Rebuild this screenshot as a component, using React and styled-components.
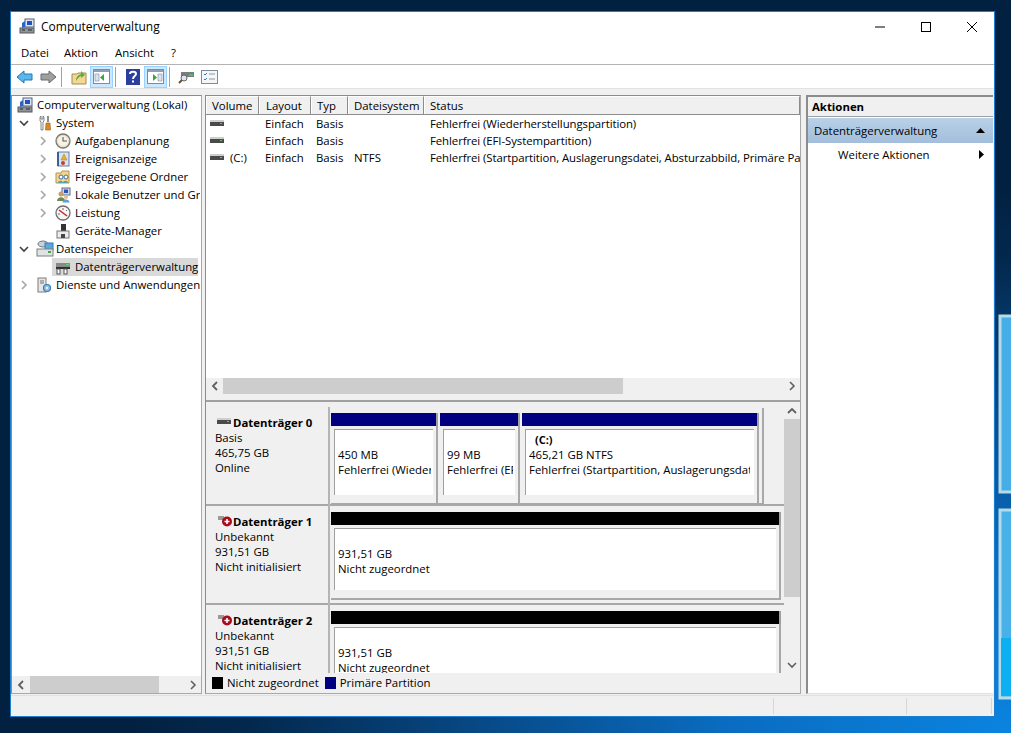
import React from "react";
import styled, { createGlobalStyle } from "styled-components";

const Global = createGlobalStyle`
  html, body { margin: 0; padding: 0; height: 100%; overflow: hidden; }
  #root { height: 100%; }
  * { box-sizing: border-box; }
`;

const Desktop = styled.div`
  position: relative;
  width: 1011px;
  height: 733px;
  padding: 11px 16px 16px 10px;
  overflow: hidden;
  background: radial-gradient(ellipse 900px 560px at 100% 100%, #0a84e0 0%, #0a6cc0 32%, #07457f 62%, #03284d 85%, #02203f 100%);
  font-family: "Open Sans", "Noto Sans", sans-serif;
  font-size: 11.4px;
  color: #000;
`;
const Backdrop = styled.svg`
  position: absolute;
  left: 0;
  top: 0;
`;
const Window = styled.div`
  position: relative;
  height: 706px;
  border: 1px solid #1a7fd0;
  background: #f0f0f0;
  display: flex;
  flex-direction: column;
`;
const TitleBar = styled.div`
  height: 30px;
  background: #fff;
  display: flex;
  align-items: center;
  padding: 0 0 2px 8px;
  gap: 6px;
  font-size: 12px;
`;
const TitleText = styled.span`
  flex: 1;
`;
const CaptionGroup = styled.div`
  display: flex;
  margin: 2px -1px 0 0;
`;
const Caption = styled.div`
  width: 46px;
  height: 30px;
  display: flex;
  align-items: center;
  justify-content: center;
`;
const MenuBar = styled.div`
  height: 23px;
  background: #fff;
  display: flex;
  align-items: center;
  padding: 0 0 2px 10px;
  border-bottom: 1px solid #b4b4b4;
`;
const MenuItem = styled.span`
  width: ${(p) => p.$w}px;
`;
const ToolBar = styled.div`
  height: 24px;
  background: #fff;
  border-bottom: 1px solid #e3e3e3;
  display: flex;
  align-items: center;
  padding-left: 2px;
`;
const ToolBtn = styled.div`
  width: ${(p) => p.$w || 23}px;
  height: 22px;
  display: flex;
  align-items: center;
  justify-content: center;
  ${(p) => p.$on && "background:#cce8ff;border:1px solid #99d1ff;"}
`;
const ToolSep = styled.div`
  width: 1px;
  height: 20px;
  background: #a0a0a0;
  margin: 0 5px 0 2px;
`;
const Main = styled.div`
  flex: 1;
  min-height: 0;
  display: flex;
  padding: 6px 1px 1px 0;
  gap: 3px;
`;
const Panel = styled.div`
  background: #fff;
  border-top: 1px solid #8c8c8c;
  border-left: 1px solid #8c8c8c;
  border-right: 1px solid #a8a8a8;
  border-bottom: 1px solid #a8a8a8;
  display: flex;
  flex-direction: column;
  min-height: 0;
  overflow: hidden;
`;
const TreePanel = styled(Panel)`
  width: 191px;
  flex: none;
`;
const Tree = styled.div`
  flex: 1;
  margin-right: 1px;
  overflow: hidden;
`;
const TreeRow = styled.div`
  height: 18px;
  display: flex;
  align-items: center;
  white-space: nowrap;
  padding-left: ${(p) => p.$indent}px;
`;
const Chevron = styled.div`
  width: 13px;
  height: 16px;
  margin-right: 3px;
  display: flex;
  align-items: center;
  justify-content: center;
  flex: none;
`;
const TreeIcon = styled.div`
  width: 18px;
  height: 18px;
  display: flex;
  align-items: center;
  flex: none;
  margin-right: 1px;
`;
const TreeLabel = styled.span`
  line-height: 18px;
  padding: 0 1px;
`;
const TreeItem = styled.div`
  display: flex;
  align-items: center;
  padding-left: ${(p) => (p.$root ? 0 : 3)}px;
  ${(p) => p.$sel && "background:#d9d9d9;width:146px;"}
`;
const HScroll = styled.div`
  height: ${(p) => p.$h || 17}px;
  background: #f0f0f0;
  display: flex;
  align-items: center;
  flex: none;
`;
const ScrollBtn = styled.div`
  width: ${(p) => p.$s || 17}px;
  height: 16px;
  display: flex;
  align-items: center;
  justify-content: center;
  flex: none;
`;
const HThumb = styled.div`
  width: ${(p) => p.$w}px;
  height: 100%;
  background: #cdcdcd;
  flex: none;
`;
const Filler = styled.div`
  flex: 1;
`;
const CenterPanel = styled(Panel)`
  width: 596px;
  flex: none;
  background: #f0f0f0;
`;
const ListArea = styled.div`
  height: 298px;
  background: #fff;
  display: flex;
  flex-direction: column;
  flex: none;
`;
const ColGrid = styled.div`
  display: grid;
  grid-template-columns: 53px 52px 37px 76px 1fr;
`;
const HeaderRow = styled(ColGrid)`
  height: 19px;
  flex: none;
  border-bottom: 1px solid #8c8c8c;
`;
const HeaderCell = styled.div`
  background: #f0f0f0;
  border-right: 1px solid #8c8c8c;
  border-left: 1px solid #fff;
  border-top: 1px solid #fff;
  padding-left: ${(p) => p.$p}px;
  line-height: 17px;
  white-space: nowrap;
`;
const Rows = styled.div`
  flex: 1;
`;
const DataRow = styled(ColGrid)`
  height: 17px;
  line-height: 17px;
  white-space: nowrap;
`;
const Cell = styled.div`
  padding-left: ${(p) => p.$p || 6}px;
  overflow: hidden;
  display: flex;
  align-items: center;
`;
const StatusText = styled(Cell)`
  letter-spacing: -0.08px;
`;
const VolCell = styled(Cell)`
  padding-left: 4px;
  gap: 6px;
`;
const Splitter = styled.div`
  height: 8px;
  flex: none;
  background: #f0f0f0;
  border-bottom: 2px solid #a0a0a0;
`;
const DiskArea = styled.div`
  flex: 1;
  min-height: 0;
  display: flex;
  padding-top: 1px;
`;
const DiskList = styled.div`
  flex: 1;
  overflow: hidden;
  padding-top: 4px;
`;
const DiskRow = styled.div`
  height: 99px;
  display: flex;
  border-bottom: 2px solid #a8a8a8;
`;
const DiskInfo = styled.div`
  width: 124px;
  flex: none;
  padding: 7px 0 0 9px;
  line-height: 15px;
  border-right: 2px solid #b4b4b4;
  margin-bottom: -2px;
  white-space: nowrap;
`;
const DiskName = styled.div`
  display: flex;
  align-items: center;
  font-weight: 700;
  gap: ${(p) => p.$gap}px;
  margin-left: 2px;
  height: 16px;
`;
const Volumes = styled.div`
  flex: none;
  width: ${(p) => p.$w}px;
  height: ${(p) => p.$h}px;
  margin: 1px 0 0 1px;
  border-right: ${(p) => (p.$plain ? "0" : "2px solid #a8a8a8")};
  border-bottom: 2px solid #a8a8a8;
  display: flex;
  padding: 5px ${(p) => (p.$plain ? 0 : 3)}px 0 0;
  gap: 2px;
`;
const Volume = styled.div`
  width: ${(p) => p.$w}px;
  min-width: 0;
  display: flex;
  flex-direction: column;
  flex: ${(p) => (p.$w ? "none" : "1")};
`;
const VolumeBar = styled.div`
  height: 13px;
  background: ${(p) => p.$c};
  border-right: 2px solid #a0a0a0;
  flex: none;
`;
const VolumeOuter = styled.div`
  flex: 1;
  min-height: 0;
  border-right: 2px solid #a8a8a8;
  padding: 3px 3px 8px 3px;
  display: flex;
`;
const VolumeBody = styled.div`
  flex: 1;
  min-width: 0;
  background: #fff;
  border-top: 1px solid #a0a0a0;
  border-left: 1px solid #a0a0a0;
  padding: ${(p) => p.$pt}px ${(p) => p.$pr || 2}px 0 3px;
  line-height: 15px;
  white-space: nowrap;
`;
const VolLine = styled.div`
  overflow: hidden;
`;
const VolTitle = styled.div`
  font-weight: 700;
  padding-left: 6px;
  font-size: 11px;
`;
const VScroll = styled.div`
  width: 16px;
  flex: none;
  display: flex;
  flex-direction: column;
  background: #f0f0f0;
`;
const VThumb = styled.div`
  height: 178px;
  background: #cdcdcd;
  flex: none;
`;
const Legend = styled.div`
  height: 20px;
  flex: none;
  background: #f0f0f0;
  display: flex;
  align-items: center;
  padding: 0 0 1px 6px;
  gap: 4px;
`;
const Swatch = styled.div`
  width: 11px;
  height: 12px;
  margin-left: ${(p) => p.$ml || 0}px;
  background: ${(p) => p.$c};
  flex: none;
`;
const ActionPanel = styled(Panel)`
  flex: 1;
  margin-left: 2px;
  border-top-width: 2px;
  border-left-width: 2px;
  border-right: 0;
  border-bottom-color: #e0e0e0;
`;
const ActionHead = styled.div`
  height: 20px;
  background: #f0f0f0;
  border-bottom: 1px solid #a0a0a0;
  font-weight: 700;
  padding-left: 4px;
  line-height: 19px;
  flex: none;
`;
const ActionGroup = styled.div`
  height: 25px;
  margin-top: 1px;
  background: linear-gradient(#b9d0e8, #a3bedb);
  display: flex;
  align-items: center;
  justify-content: space-between;
  padding: 0 8px 0 6px;
  flex: none;
`;
const ActionItem = styled.div`
  height: 23px;
  display: flex;
  align-items: center;
  justify-content: space-between;
  padding: 0 9px 0 30px;
`;
const StatusBar = styled.div`
  height: 21px;
  flex: none;
  display: flex;
  border-top: 1px solid #e0e0e0;
  padding: 2px 2px 2px 0;
`;
const StatusCell = styled.div`
  width: ${(p) => p.$w}px;
  flex: ${(p) => (p.$w ? "none" : "1")};
  border-right: 1px solid #d6d6d6;
`;

const Svg = ({ w = 16, h = 16, children }) => (
  <svg width={w} height={h} viewBox={`0 0 ${w} ${h}`}>{children}</svg>
);

const ChevR = ({ c = "#a6a6a6" }) => (
  <Svg w={8} h={10}><path d="M2 1l4 4-4 4" fill="none" stroke={c} strokeWidth="1.6" /></Svg>
);
const ChevL = ({ c = "#606060" }) => (
  <Svg w={8} h={10}><path d="M6 1L2 5l4 4" fill="none" stroke={c} strokeWidth="1.8" /></Svg>
);
const ChevD = ({ c = "#404040" }) => (
  <Svg w={10} h={8}><path d="M1 2l4 4 4-4" fill="none" stroke={c} strokeWidth="1.6" /></Svg>
);
const ChevU = ({ c = "#606060" }) => (
  <Svg w={10} h={8}><path d="M1 6l4-4 4 4" fill="none" stroke={c} strokeWidth="1.8" /></Svg>
);

const ComputerIcon = () => (
  <Svg>
    <rect x="6" y="1" width="9" height="8" fill="#dfe6f2" stroke="#55627a" />
    <rect x="8" y="3" width="5" height="4" fill="#1f50c8" />
    <path d="M3 5l3-2v6l-3 1z" fill="#2d62c8" />
    <rect x="1" y="10" width="14" height="5" fill="#8f949a" stroke="#54585e" />
    <path d="M3 12h3M9 12h4" stroke="#24282c" />
  </Svg>
);
const ToolsIcon = () => (
  <Svg>
    <path d="M4 2v4l1 1v8h2V7l1-1V2L7 1v3H5V1z" fill="#f3f3f3" stroke="#6c6c6c" strokeWidth=".8" />
    <rect x="11" y="1" width="2" height="6" fill="#8d8d8d" />
    <path d="M10 8h4l.5 7h-5z" fill="#d98a1e" stroke="#9a5a12" strokeWidth=".6" />
  </Svg>
);
const ClockIcon = () => (
  <Svg>
    <circle cx="8" cy="8" r="7" fill="#e6e0cf" stroke="#7a7a72" strokeWidth="1.3" />
    <circle cx="8" cy="8" r="5" fill="#f7f3e6" />
    <path d="M8 4v4h4" fill="none" stroke="#5c5c52" strokeWidth="1.1" />
  </Svg>
);
const EventIcon = () => (
  <Svg>
    <rect x="3" y="1" width="11" height="14" fill="#dbe4f2" stroke="#5f7fa8" />
    <rect x="2" y="1" width="2" height="14" fill="#3b5f96" />
    <path d="M9 3l3 6H6z" fill="#e9b12a" stroke="#a87a14" strokeWidth=".5" />
    <circle cx="8" cy="12" r="2" fill="#c8402c" />
  </Svg>
);
const ShareIcon = () => (
  <Svg>
    <path d="M1 4h5l1-2h7v12H1z" fill="#f2d68d" stroke="#b7954c" />
    <circle cx="6" cy="8" r="2" fill="#fff" stroke="#3a6ca8" />
    <circle cx="11" cy="8" r="2" fill="#fff" stroke="#3a6ca8" />
    <path d="M3 14c0-3 5-3 5 0zM8 14c0-3 5-3 5 0z" fill="#59a0a0" />
  </Svg>
);
const UsersIcon = () => (
  <Svg>
    <rect x="7" y="1" width="8" height="7" fill="#cfd9ea" stroke="#5b6b85" />
    <rect x="9" y="2.500" width="4" height="3.500" fill="#2a55b8" />
    <circle cx="6" cy="7" r="2.500" fill="#c79e6c" />
    <path d="M2 14c0-5 8-5 8 0z" fill="#6e8a52" />
    <circle cx="11" cy="10" r="2" fill="#e2bd8e" />
    <path d="M7.500 15.500c0-4 7-4 7 0z" fill="#5b9ed8" />
  </Svg>
);
const GaugeIcon = () => (
  <Svg>
    <circle cx="8" cy="8" r="7" fill="#f6f6f6" stroke="#6e6e6e" strokeWidth="1.3" />
    <path d="M4 5l8 6" stroke="#c8281e" strokeWidth="1.500" />
    <path d="M3 9h2M8 3v2M12 5l-1 1" stroke="#666" />
  </Svg>
);
const DeviceIcon = () => (
  <Svg>
    <rect x="6" y="1" width="5" height="7" fill="#333" />
    <rect x="2" y="8" width="12" height="7" fill="#ececec" stroke="#777" />
    <rect x="6" y="11" width="4" height="4" fill="#444" />
  </Svg>
);
const StorageIcon = () => (
  <Svg w={18} h={18}>
    <ellipse cx="7" cy="4" rx="5" ry="3" fill="#c7d2da" stroke="#6c7a82" />
    <rect x="9" y="3" width="8" height="7" fill="#5aa8dc" stroke="#3a7cb0" />
    <rect x="1" y="9" width="16" height="7" fill="#dfe3e3" stroke="#7a8080" />
    <rect x="12" y="11" width="3" height="2" fill="#49a53c" />
  </Svg>
);
const DiskMgmtIcon = () => (
  <Svg>
    <rect x="1" y="4" width="14" height="4" fill="#8a8a8a" />
    <rect x="1" y="8" width="14" height="2" fill="#2c2c2c" />
    <rect x="11" y="5" width="3" height="1" fill="#5fdc5f" />
    <rect x="2" y="10" width="3" height="5" fill="#fff" stroke="#555" />
    <rect x="9" y="10" width="3" height="5" fill="#fff" stroke="#555" />
  </Svg>
);
const ServicesIcon = () => (
  <Svg>
    <rect x="2" y="1" width="8" height="14" fill="#e6e6e6" stroke="#7c7c7c" />
    <path d="M4 4h4M4 6h4" stroke="#777" />
    <circle cx="11" cy="11" r="3.500" fill="#8ec0e8" stroke="#3f78b0" strokeWidth="1.200" />
    <circle cx="11" cy="11" r="1" fill="#fff" />
  </Svg>
);
const DriveIcon = () => (
  <Svg w={14} h={8}>
    <rect x="0" y="0" width="14" height="2" fill="#cfcfcf" />
    <rect x="0" y="2" width="14" height="4" fill="#4a4a4a" />
    <rect x="10" y="3" width="2" height="1" fill="#4fd060" />
  </Svg>
);
const ErrDiskIcon = () => (
  <Svg w={16} h={12}>
    <rect x="1" y="1" width="6" height="4" fill="#9a9a9a" />
    <circle cx="10" cy="6.500" r="5" fill="#a80d1c" />
    <path d="M7.500 6.500h5M10 4v5" stroke="#fff" strokeWidth="1.600" />
  </Svg>
);
const ArrowBack = () => (
  <Svg w={18} h={16}>
    <path d="M1 8l7-6v3h8v6H8v3z" fill="#5cb6ea" stroke="#1f78b8" />
  </Svg>
);
const ArrowFwd = () => (
  <Svg w={18} h={16}>
    <path d="M17 8l-7-6v3H2v6h8v3z" fill="#a0a0a0" stroke="#6a6a6a" />
  </Svg>
);
const UpFolder = () => (
  <Svg>
    <path d="M1 5h5l1-1h8v11H1z" fill="#f4d793" stroke="#a88a4c" />
    <path d="M5 12c0-4 2-6 5-7V2l4 4-4 3V7c-2 1-3 2-5 5z" fill="#5dae3c" />
  </Svg>
);
const PaneIcon = ({ flip }) => (
  <Svg w={17} h={15}>
    <rect x=".5" y=".5" width="16" height="14" fill="#fff" stroke="#7c8c9c" />
    <rect x="1" y="1" width="15" height="2" fill="#8ea0b4" />
    <path d={flip ? "M11 5v7h4V5z" : "M2 5v7h4V5z"} fill="#dbe4ee" stroke="#7c8c9c" strokeWidth=".6" />
    <path d={flip ? "M6 5l4 3.500-4 3.500z" : "M11 5L7 8.500l4 3.500z"} fill="#35a83a" />
  </Svg>
);
const HelpIcon = () => (
  <Svg w={14} h={16}>
    <rect width="14" height="16" fill="#2c3f9c" />
    <path d="M4 5c0-3 6-3 6 0 0 2-3 2-3 5" fill="none" stroke="#fff" strokeWidth="2" />
    <rect x="6" y="11.500" width="2" height="2" fill="#fff" />
  </Svg>
);
const ScanIcon = () => (
  <Svg w={17} h={16}>
    <rect x="3" y="3" width="13" height="5" fill="#7c7c7c" />
    <rect x="11" y="5" width="4" height="2" fill="#48c06a" />
    <circle cx="6" cy="9" r="3" fill="#dde6ee" stroke="#666" />
    <path d="M4 11l-3 3" stroke="#6a5030" strokeWidth="2" />
  </Svg>
);
const PropsIcon = () => (
  <Svg w={17} h={14}>
    <rect x=".5" y=".5" width="16" height="13" fill="#f4f6f8" stroke="#7f8b98" />
    <path d="M3 4l1 1 2-2M3 9l1 1 2-2" fill="none" stroke="#3f78b0" />
    <path d="M8 4h6M8 9h6" stroke="#8a96a2" />
  </Svg>
);

const tree = [
  { indent: 5, icon: <ComputerIcon />, label: "Computerverwaltung (Lokal)", root: true },
  { indent: 5, chev: <ChevD />, icon: <ToolsIcon />, label: "System" },
  { indent: 24, chev: <ChevR />, icon: <ClockIcon />, label: "Aufgabenplanung" },
  { indent: 24, chev: <ChevR />, icon: <EventIcon />, label: "Ereignisanzeige" },
  { indent: 24, chev: <ChevR />, icon: <ShareIcon />, label: "Freigegebene Ordner" },
  { indent: 24, chev: <ChevR />, icon: <UsersIcon />, label: "Lokale Benutzer und Gruppen" },
  { indent: 24, chev: <ChevR />, icon: <GaugeIcon />, label: "Leistung" },
  { indent: 24, chev: <span />, icon: <DeviceIcon />, label: "Geräte-Manager" },
  { indent: 5, chev: <ChevD />, icon: <StorageIcon />, label: "Datenspeicher" },
  { indent: 24, chev: <span />, icon: <DiskMgmtIcon />, label: "Datenträgerverwaltung", sel: true },
  { indent: 5, chev: <ChevR />, icon: <ServicesIcon />, label: "Dienste und Anwendungen" },
];

const listRows = [
  { vol: "", status: "Fehlerfrei (Wiederherstellungspartition)" },
  { vol: "", status: "Fehlerfrei (EFI-Systempartition)" },
  { vol: "(C:)", fs: "NTFS", status: "Fehlerfrei (Startpartition, Auslagerungsdatei, Absturzabbild, Primäre Partition)" },
];

const cols = [["Volume", 5], ["Layout", 6], ["Typ", 5], ["Dateisystem", 5], ["Status", 5]];

const Unknown = ({ n }) => (
  <DiskRow>
    <DiskInfo>
      <DiskName $gap={0}><ErrDiskIcon />Datenträger {n}</DiskName>
      <div>Unbekannt</div>
      <div>931,51 GB</div>
      <div>Nicht initialisiert</div>
    </DiskInfo>
    <Volumes $w={450} $h={93} $plain>
      <Volume>
        <VolumeBar $c="#000" />
        <VolumeOuter>
          <VolumeBody $pt={17}>
            <VolLine>931,51 GB</VolLine>
            <VolLine>Nicht zugeordnet</VolLine>
          </VolumeBody>
        </VolumeOuter>
      </Volume>
    </Volumes>
  </DiskRow>
);

export default function App() {
  return (
    <Desktop>
      <Global />
      <Backdrop width="1011" height="733">
        <path d="M1000 316h20v176h-20z" fill="#45aee6" stroke="#b6dbe8" strokeWidth="3" />
        <path d="M1000 510h20v188h-20z" fill="#48b2e8" stroke="#b6dbe8" strokeWidth="3" />
        <path d="M1001 638h20v58h-20z" fill="#0cb0f2" />
      </Backdrop>
      <Window>
        <TitleBar>
          <ComputerIcon />
          <TitleText>Computerverwaltung</TitleText>
          <CaptionGroup>
            <Caption>
              <Svg w={10} h={10}><path d="M0 5h10" stroke="#000" /></Svg>
            </Caption>
            <Caption>
              <Svg w={10} h={10}><rect x=".5" y=".5" width="9" height="9" fill="none" stroke="#000" /></Svg>
            </Caption>
            <Caption>
              <Svg w={10} h={10}><path d="M0 0l10 10M10 0L0 10" stroke="#000" /></Svg>
            </Caption>
          </CaptionGroup>
        </TitleBar>
        <MenuBar>
          <MenuItem $w={43}>Datei</MenuItem>
          <MenuItem $w={51}>Aktion</MenuItem>
          <MenuItem $w={56}>Ansicht</MenuItem>
          <MenuItem $w={10}>?</MenuItem>
        </MenuBar>
        <ToolBar>
          <ToolBtn><ArrowBack /></ToolBtn>
          <ToolBtn><ArrowFwd /></ToolBtn>
          <ToolSep />
          <ToolBtn><UpFolder /></ToolBtn>
          <ToolBtn $on><PaneIcon /></ToolBtn>
          <ToolSep />
          <ToolBtn><HelpIcon /></ToolBtn>
          <ToolBtn $on><PaneIcon flip /></ToolBtn>
          <ToolSep />
          <ToolBtn><ScanIcon /></ToolBtn>
          <ToolBtn><PropsIcon /></ToolBtn>
        </ToolBar>
        <Main>
          <TreePanel>
            <Tree>
              {tree.map((r) => (
                <TreeRow key={r.label} $indent={r.indent}>
                  {!r.root && <Chevron>{r.chev}</Chevron>}
                  <TreeItem $sel={r.sel} $root={r.root}>
                    <TreeIcon>{r.icon}</TreeIcon>
                    <TreeLabel>{r.label}</TreeLabel>
                  </TreeItem>
                </TreeRow>
              ))}
            </Tree>
            <HScroll>
              <ScrollBtn $s={18}><ChevL /></ScrollBtn>
              <HThumb $w={129} />
              <Filler />
              <ScrollBtn><ChevR c="#606060" /></ScrollBtn>
            </HScroll>
          </TreePanel>
          <CenterPanel>
            <ListArea>
              <HeaderRow>
                {cols.map(([c, p]) => <HeaderCell key={c} $p={p}>{c}</HeaderCell>)}
              </HeaderRow>
              <Rows>
                {listRows.map((r) => (
                  <DataRow key={r.status}>
                    <VolCell><DriveIcon />{r.vol}</VolCell>
                    <Cell>Einfach</Cell>
                    <Cell $p={5}>Basis</Cell>
                    <Cell>{r.fs}</Cell>
                    <StatusText $p={6}>{r.status}</StatusText>
                  </DataRow>
                ))}
              </Rows>
              <HScroll $h={16}>
                <ScrollBtn><ChevL /></ScrollBtn>
                <HThumb $w={400} />
                <Filler />
                <ScrollBtn><ChevR c="#606060" /></ScrollBtn>
              </HScroll>
            </ListArea>
            <Splitter />
            <DiskArea>
              <DiskList>
                <DiskRow>
                  <DiskInfo>
                    <DiskName $gap={2}><DriveIcon />Datenträger 0</DiskName>
                    <div>Basis</div>
                    <div>465,75 GB</div>
                    <div>Online</div>
                  </DiskInfo>
                  <Volumes $w={433} $h={97}>
                    <Volume $w={107}>
                      <VolumeBar $c="#000080" />
                      <VolumeOuter>
                        <VolumeBody $pt={17}>
                          <VolLine>450 MB</VolLine>
                          <VolLine>Fehlerfrei (Wiederherstellungspartition)</VolLine>
                        </VolumeBody>
                      </VolumeOuter>
                    </Volume>
                    <Volume $w={80}>
                      <VolumeBar $c="#000080" />
                      <VolumeOuter>
                        <VolumeBody $pt={17}>
                          <VolLine>99 MB</VolLine>
                          <VolLine>Fehlerfrei (EFI-Systempartition)</VolLine>
                        </VolumeBody>
                      </VolumeOuter>
                    </Volume>
                    <Volume>
                      <VolumeBar $c="#000080" />
                      <VolumeOuter>
                        <VolumeBody $pt={2} $pr={4}>
                          <VolTitle>(C:)</VolTitle>
                          <VolLine>465,21 GB NTFS</VolLine>
                          <VolLine>Fehlerfrei (Startpartition, Auslagerungsdatei, Absturzabbild, Primäre Partition)</VolLine>
                        </VolumeBody>
                      </VolumeOuter>
                    </Volume>
                  </Volumes>
                </DiskRow>
                <Unknown n={1} />
                <Unknown n={2} />
              </DiskList>
              <VScroll>
                <ScrollBtn $s={16}><ChevU /></ScrollBtn>
                <VThumb />
                <Filler />
                <ScrollBtn $s={16}><ChevD c="#606060" /></ScrollBtn>
              </VScroll>
            </DiskArea>
            <Legend>
              <Swatch $c="#000" />
              <span>Nicht zugeordnet</span>
              <Swatch $c="#000080" $ml={2} />
              <span>Primäre Partition</span>
            </Legend>
          </CenterPanel>
          <ActionPanel>
            <ActionHead>Aktionen</ActionHead>
            <ActionGroup>
              <span>Datenträgerverwaltung</span>
              <Svg w={9} h={5}><path d="M0 5L4.500 0 9 5z" fill="#000" /></Svg>
            </ActionGroup>
            <ActionItem>
              <span>Weitere Aktionen</span>
              <Svg w={5} h={9}><path d="M0 0l5 4.500L0 9z" fill="#000" /></Svg>
            </ActionItem>
          </ActionPanel>
        </Main>
        <StatusBar>
          <StatusCell />
          <StatusCell $w={133} />
          <StatusCell $w={85} />
        </StatusBar>
      </Window>
    </Desktop>
  );
}
